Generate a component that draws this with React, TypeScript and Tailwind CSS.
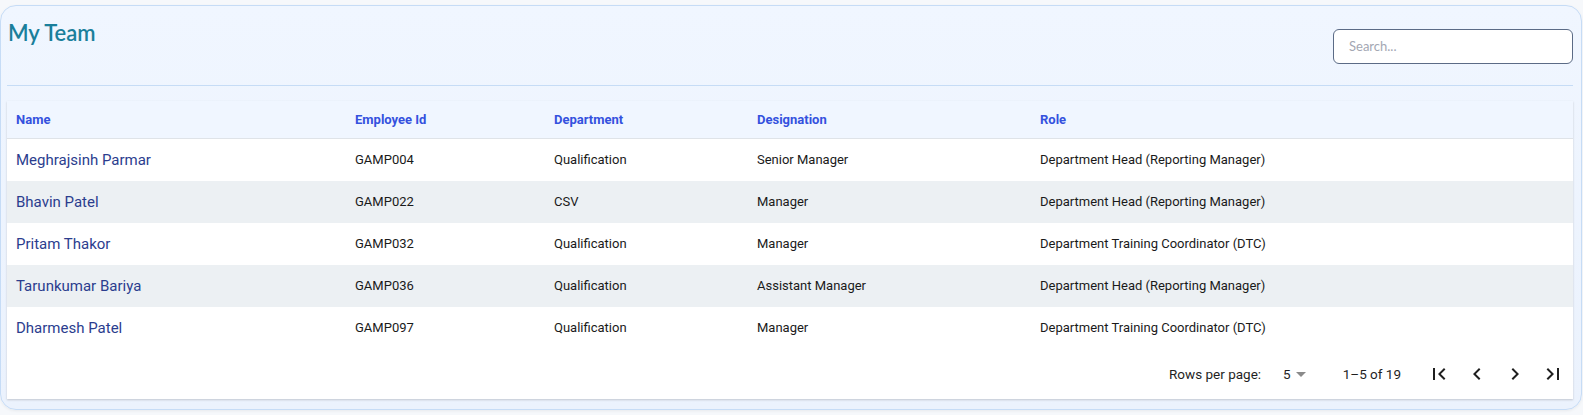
import React from "react";

const rows = [
  { name: "Meghrajsinh Parmar", id: "GAMP004", dept: "Qualification", desig: "Senior Manager", role: "Department Head (Reporting Manager)" },
  { name: "Bhavin Patel", id: "GAMP022", dept: "CSV", desig: "Manager", role: "Department Head (Reporting Manager)" },
  { name: "Pritam Thakor", id: "GAMP032", dept: "Qualification", desig: "Manager", role: "Department Training Coordinator (DTC)" },
  { name: "Tarunkumar Bariya", id: "GAMP036", dept: "Qualification", desig: "Assistant Manager", role: "Department Head (Reporting Manager)" },
  { name: "Dharmesh Patel", id: "GAMP097", dept: "Qualification", desig: "Manager", role: "Department Training Coordinator (DTC)" },
];

function Icon({ d }: { d: string }) {
  return (
    <svg viewBox="0 0 24 24" width="24" height="24" fill="#1f1f1f">
      <path d={d} />
    </svg>
  );
}

export default function App() {
  return (
    <div className="min-h-[415px] bg-[#f6f8fb] pt-[5px] pr-[1px]" style={{ fontFamily: "Roboto, 'Liberation Sans', sans-serif" }}>
      <div className="rounded-[16px] border border-[#c6dcf6] bg-gradient-to-b from-[#f0f6ff] to-[#ebf2fd] pl-[6px] pr-[8px] pb-[10px] shadow-[0_1px_3px_rgba(0,0,0,0.06)]">
        <div className="flex items-start justify-between border-b border-[#c6dcf6] h-[80px]">
          <h1 className="pt-[13px] pl-[1px] text-[22px] leading-[28px] font-semibold text-[#1a7f9b]" style={{ fontFamily: "Lato, 'Open Sans', sans-serif" }}>
            My Team
          </h1>
          <div className="mt-[23px] w-[240px] h-[35px] rounded-[6px] border border-[#5b6b86] bg-white flex items-center pl-[15px]">
            <span className="text-[13px] text-[#a3a7b3]" style={{ fontFamily: "Lato, 'Open Sans', sans-serif" }}>Search...</span>
          </div>
        </div>
        <div className="mt-[15px] shadow-[0_1px_2px_rgba(0,0,0,0.18)]">
          <div className="flex h-[38px] items-center bg-[#f0f6ff] border-b border-[#dfe3e8] text-[13px] font-bold text-[#3451de]">
            <div className="w-[332px] pl-[9px]">Name</div>
            <div className="w-[199px] pl-[16px]">Employee Id</div>
            <div className="w-[203px] pl-[16px]">Department</div>
            <div className="w-[283px] pl-[16px]">Designation</div>
            <div className="flex-1 pl-[16px]">Role</div>
          </div>
          {rows.map((r, i) => (
            <div key={r.id} className={`flex h-[42px] items-center text-[13px] text-[#1a1a1a] ${i % 2 === 1 ? "bg-[#ecf0f3]" : "bg-white"}`}>
              <div className="w-[332px] pl-[9px] text-[15px] text-[#2b3d8e]">{r.name}</div>
              <div className="w-[199px] pl-[16px]">{r.id}</div>
              <div className="w-[203px] pl-[16px]">{r.dept}</div>
              <div className="w-[283px] pl-[16px]">{r.desig}</div>
              <div className="flex-1 pl-[16px]">{r.role}</div>
            </div>
          ))}
          <div className="flex h-[50px] items-center justify-end bg-white text-[13.5px] text-[#1f1f1f] pr-[8px]">
            <span>Rows per page:</span>
            <span className="ml-[22px]">5</span>
            <svg className="ml-[5px]" width="10" height="5" viewBox="0 0 10 5"><path d="M0 0h10L5 5z" fill="#8a8a8a" /></svg>
            <span className="ml-[37px]">1–5 of 19</span>
            <div className="ml-[26px] flex items-center gap-[14px]">
              <Icon d="M18.41 16.59L13.82 12l4.59-4.59L17 6l-6 6 6 6zM6 6h2v12H6z" />
              <Icon d="M15.41 7.41L14 6l-6 6 6 6 1.41-1.41L10.83 12z" />
              <Icon d="M10 6L8.59 7.41 13.17 12l-4.58 4.59L10 18l6-6z" />
              <Icon d="M5.59 7.41L10.18 12l-4.59 4.59L7 18l6-6-6-6zM16 6h2v12h-2z" />
            </div>
          </div>
        </div>
      </div>
    </div>
  );
}
